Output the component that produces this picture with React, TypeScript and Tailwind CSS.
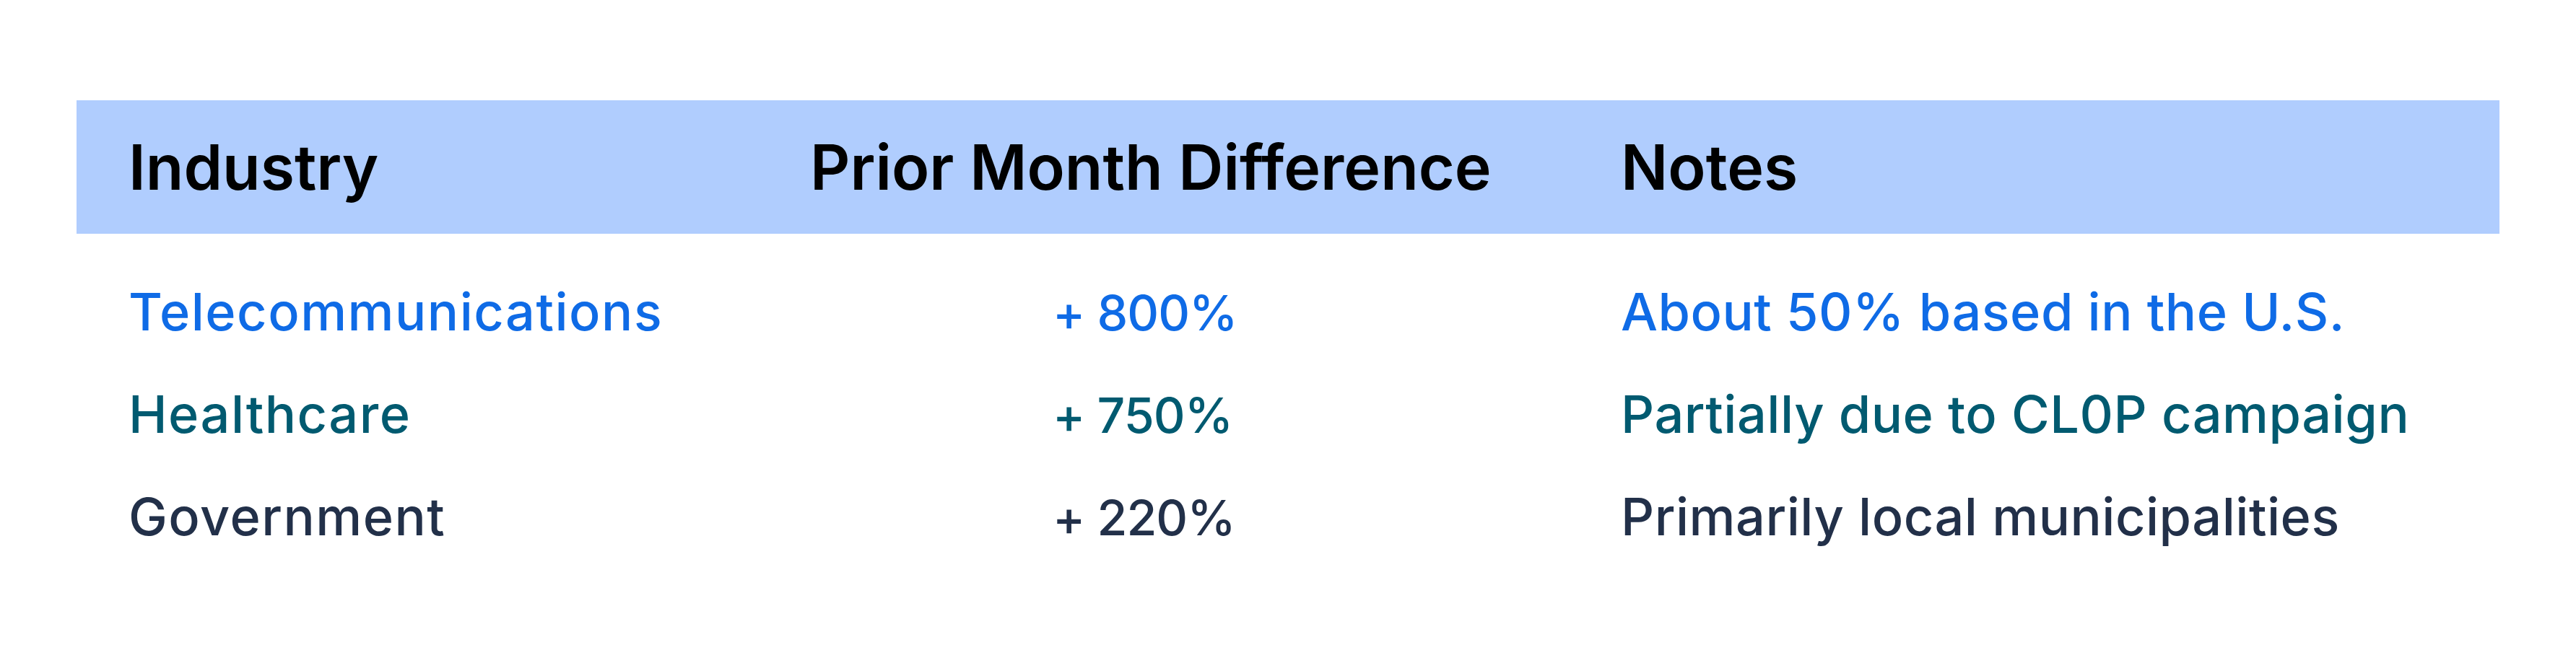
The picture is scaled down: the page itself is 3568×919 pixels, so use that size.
const rows = [
  {
    industry: "Telecommunications",
    diff: "+ 800%",
    note: "About 50% based in the U.S.",
    color: "text-[#0f6be6]",
  },
  {
    industry: "Healthcare",
    diff: "+ 750%",
    note: "Partially due to CL0P campaign",
    color: "text-[#015a70]",
  },
  {
    industry: "Government",
    diff: "+ 220%",
    note: "Primarily local municipalities",
    color: "text-[#223049]",
  },
];

export default function App() {
  return (
    <div className="min-h-[919px] bg-white pt-[139px] font-['Inter',sans-serif]">
      <div className="mx-[106px]">
        {/* header band */}
        <div className="grid h-[185px] grid-cols-[944px_1123px_1fr] items-center bg-[#b0cdfe] text-[86px] font-semibold leading-none text-black">
          <div className="pl-[72px]">Industry</div>
          <div className="pl-[72px]">Prior Month Difference</div>
          <div className="pl-[72px]">Notes</div>
        </div>

        <div className="pt-[37px]">
          {rows.map((row) => (
            <div
              key={row.industry}
              className={`grid grid-cols-[944px_1123px_1fr] items-baseline py-[35px] leading-none ${row.color}`}
            >
              <div className="pl-[72px] text-[72px] font-medium tracking-[1.5px]">{row.industry}</div>
              <div className="pl-[408px] text-[68px] font-medium tracking-[-1px]">{row.diff}</div>
              <div className="pl-[72px] text-[72px] font-medium tracking-[0.5px]">{row.note}</div>
            </div>
          ))}
        </div>
      </div>
    </div>
  );
}
